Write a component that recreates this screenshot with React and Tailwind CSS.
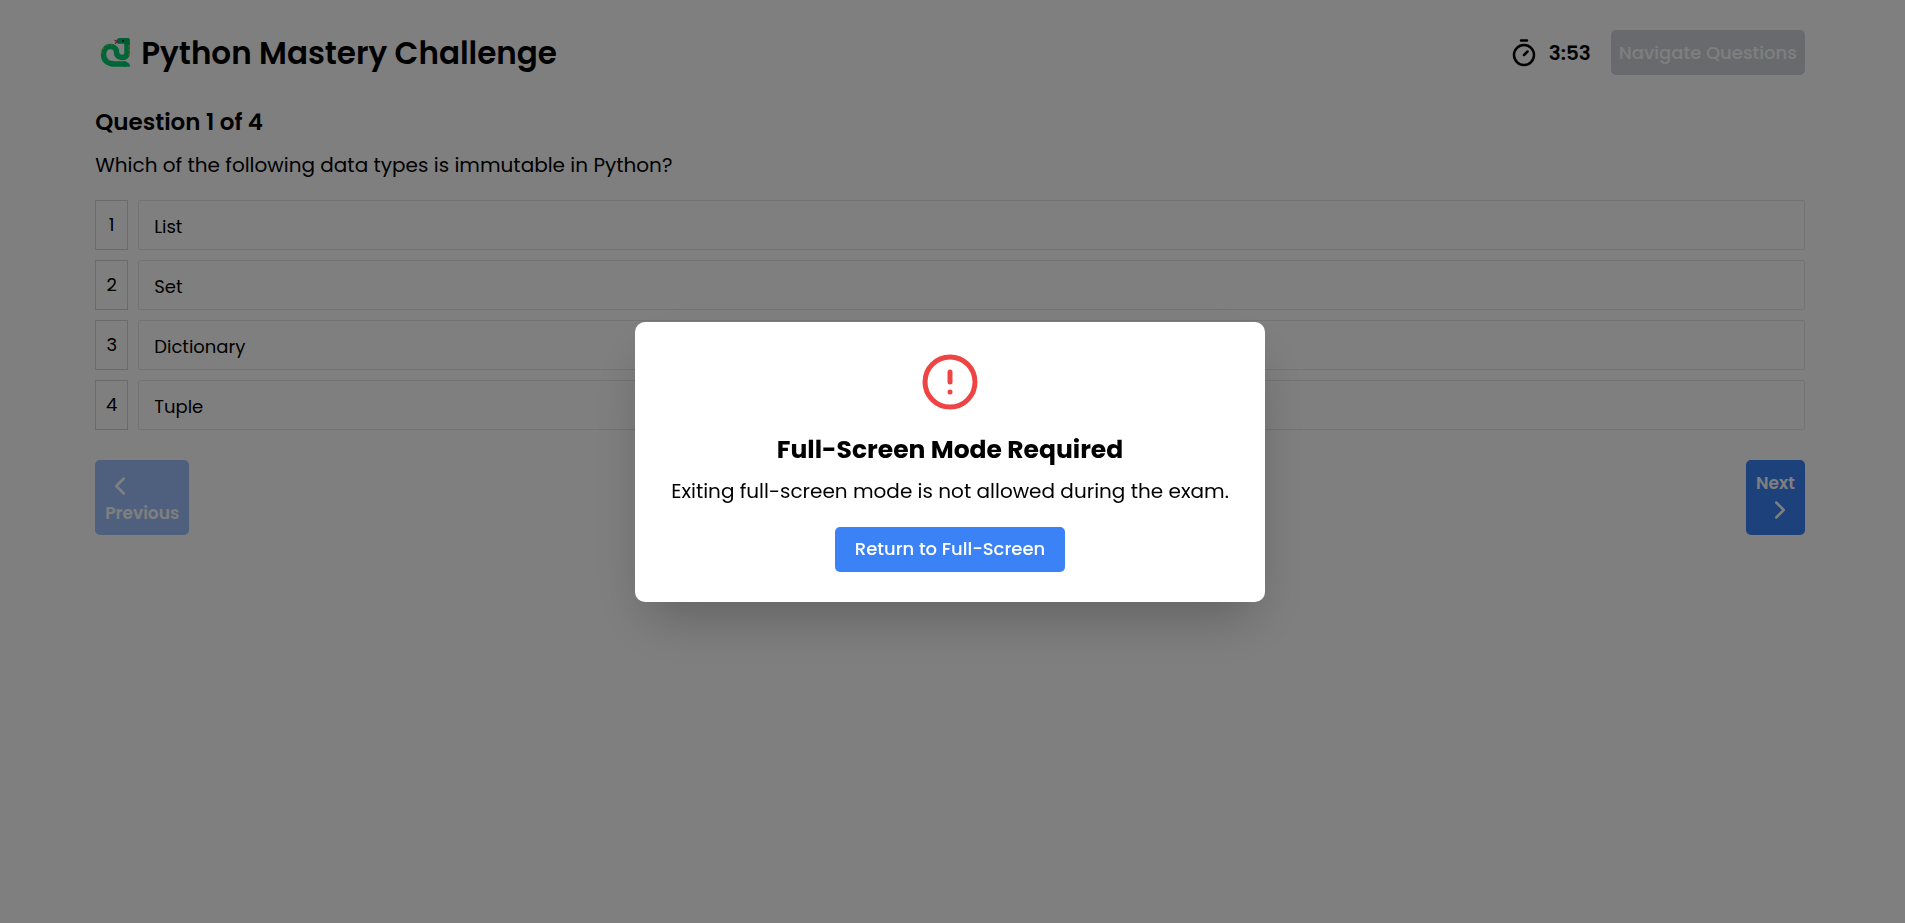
import { FiAlertCircle, FiChevronLeft, FiChevronRight } from "react-icons/fi";

const options = ["List", "Set", "Dictionary", "Tuple"];

function Snake() {
  return (
    <svg viewBox="0 0 36 36" className="h-9 w-9 shrink-0" fill="none" aria-hidden="true">
      <path
        d="M32 7V18C32 21.500 30 22.500 27.500 22.500C24.500 22.500 21.500 21 21.500 17C21.500 13.500 19 11.500 15.500 11.500C11.500 11.500 8.500 15 8.500 19.500C8.500 25.500 13 29 20 29H31"
        stroke="#00cc70"
        strokeWidth="5.500"
      />
      <path d="M29 26.200C32 26.500 34.500 28 35 30.500C35.200 31.500 34.800 31.800 34 31.800H29Z" fill="#00cc70" />
      <path d="M34.800 10V5C34.800 3.500 34 3 33 3H25C22.500 3 21.500 4.500 21.500 6C21.500 8 22.500 8.800 24 8.800H29.200Z" fill="#00b866" />
      <path d="M22 6.500L19.500 5M22 7L20 8.500" stroke="#d0304c" strokeWidth="1.100" />
      <circle cx="28" cy="6" r="1.100" fill="#17202a" />
      <g fill="#d8b020">
        <circle cx="34" cy="11" r="0.900" />
        <circle cx="34" cy="15" r="0.900" />
        <circle cx="34" cy="19" r="0.900" />
        <circle cx="6.800" cy="18" r="0.900" />
        <circle cx="8.200" cy="13.500" r="0.900" />
        <circle cx="12" cy="10.200" r="0.900" />
        <circle cx="16.500" cy="9.600" r="0.900" />
      </g>
    </svg>
  );
}

function Stopwatch() {
  return (
    <svg
      viewBox="0 0 30 30"
      className="h-[30px] w-[30px]"
      fill="none"
      stroke="currentColor"
      strokeWidth="2.5"
      strokeLinecap="round"
      aria-hidden="true"
    >
      <circle cx="15" cy="17" r="10" />
      <path d="M12 2.5H18M15 17L18.5 13.5" />
    </svg>
  );
}

export default function App() {
  return (
    <div className="min-h-screen bg-white font-['Poppins','Inter',sans-serif] text-lg text-black">
      <main className="mr-[5px] px-[5%] pt-[30px]">
        <header className="flex items-center justify-between">
          <h1 className="flex items-center gap-[10px] text-[31px] leading-9 font-semibold">
            <Snake />
            Python Mastery Challenge
          </h1>
          <div className="flex items-center gap-5">
            <div className="flex items-center gap-[10px] text-xl font-semibold">
              <Stopwatch />
              3:53
            </div>
            <button disabled className="h-[45px] rounded-[5px] bg-[#d1d5db] px-2 text-lg font-medium text-white">
              Navigate Questions
            </button>
          </div>
        </header>

        <h2 className="mt-[31px] text-[23px] leading-[32px] font-semibold">Question 1 of 4</h2>
        <p className="mt-3 text-xl leading-[30px]">Which of the following data types is immutable in Python?</p>

        <ol className="mt-5 flex flex-col gap-[10px]">
          {options.map((option, i) => (
            <li key={option} className="flex h-[50px] gap-[10px]">
              <span className="flex w-[33px] items-center justify-center border border-[#d1d5db]">{i + 1}</span>
              <button className="flex-1 rounded-xs border border-[#e5e7eb] px-[15px] pt-1 text-left">{option}</button>
            </li>
          ))}
        </ol>

        <div className="mt-[30px] flex justify-between text-[17px] leading-6 font-semibold text-white">
          <button disabled className="h-[75px] rounded-[5px] bg-[#9dc1fb] px-[10px] text-left">
            <FiChevronLeft className="h-[30px] w-[30px]" />
            Previous
          </button>
          <button className="h-[75px] rounded-[5px] bg-[#3b82f6] px-[10px] text-right">
            Next
            <FiChevronRight className="ml-auto h-[30px] w-[30px]" />
          </button>
        </div>
      </main>

      <div className="fixed inset-0 flex items-center justify-center bg-black/50 pr-[5px]">
        <div
          role="dialog"
          aria-modal="true"
          aria-labelledby="dialog-title"
          className="flex w-[630px] flex-col items-center rounded-[10px] bg-white p-[30px] shadow-2xl"
        >
          <FiAlertCircle className="h-[60px] w-[60px] text-[#ef4444]" />
          <h2 id="dialog-title" className="mt-5 text-[25px] leading-[36px] font-bold">
            Full-Screen Mode Required
          </h2>
          <p className="mt-2 text-xl leading-[30px] whitespace-nowrap">
            Exiting full-screen mode is not allowed during the exam.
          </p>
          <button className="mt-[21px] h-[45px] rounded-[5px] bg-[#3b82f6] px-5 text-lg font-medium text-white">
            Return to Full-Screen
          </button>
        </div>
      </div>
    </div>
  );
}
